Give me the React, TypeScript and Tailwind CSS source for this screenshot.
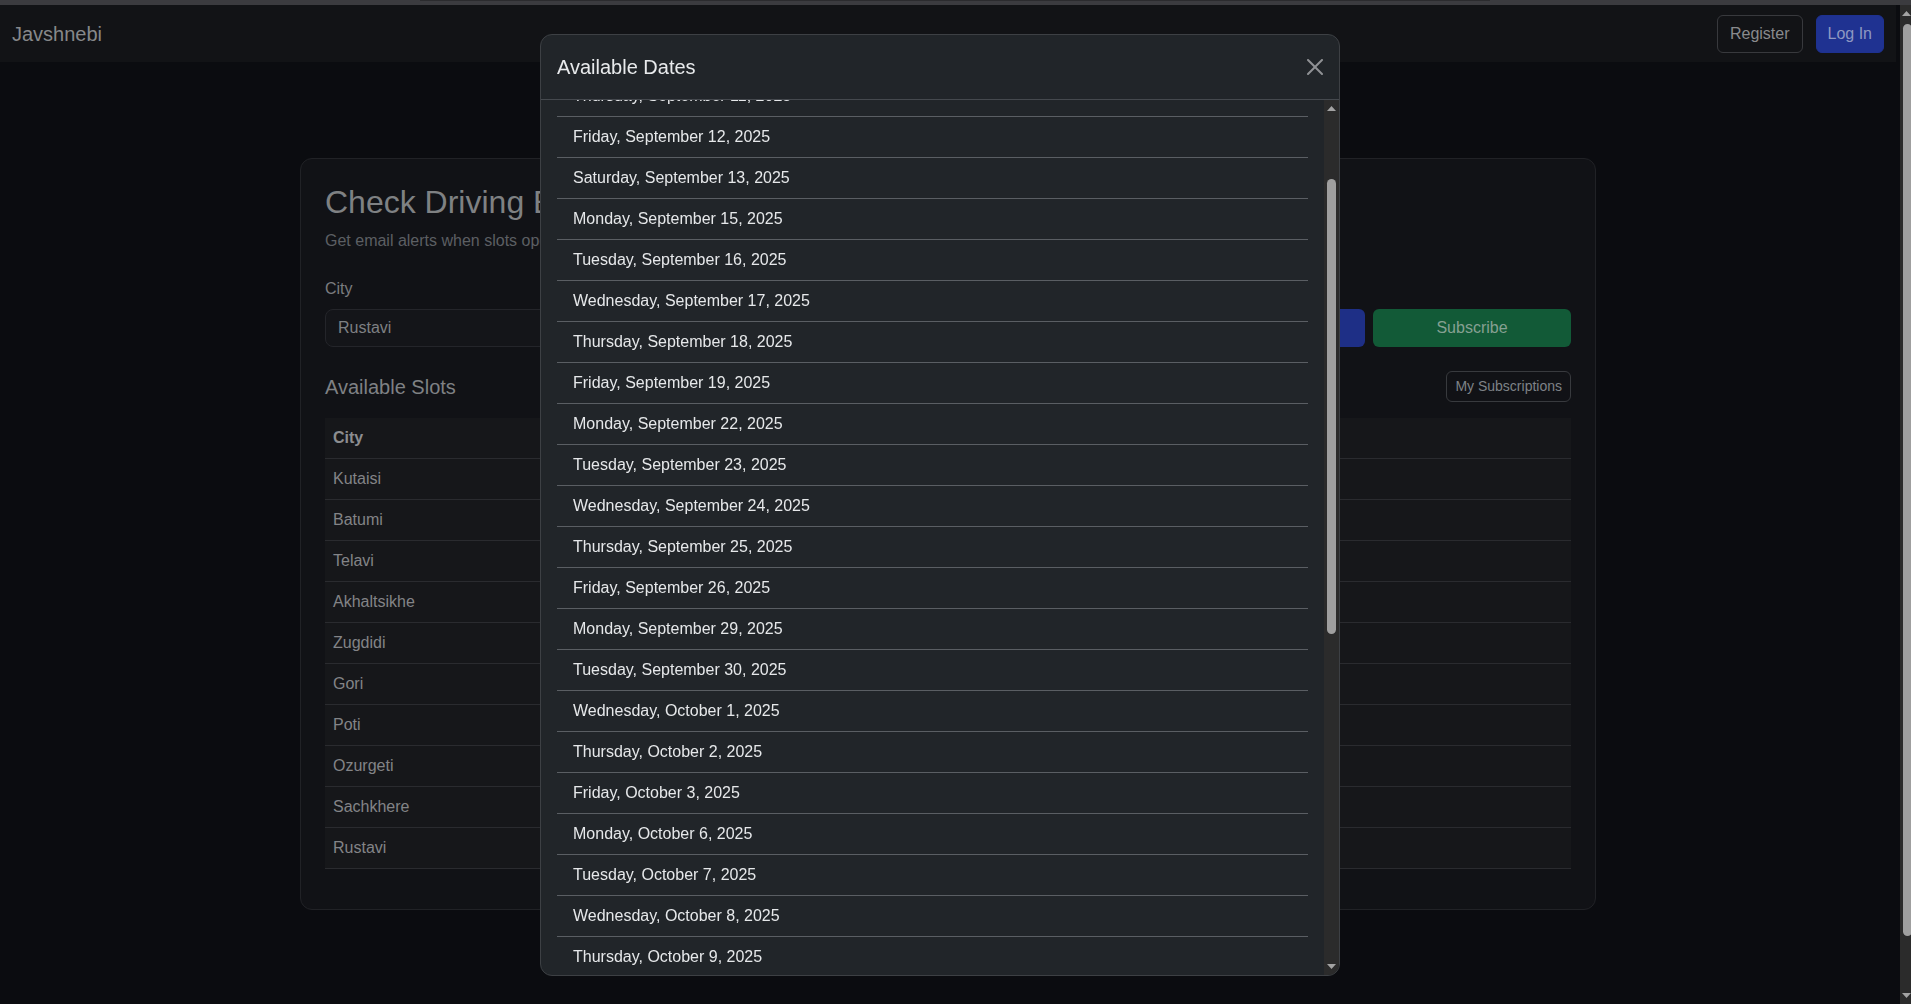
import { useLayoutEffect, useRef } from "react";

const WD = ["Sunday", "Monday", "Tuesday", "Wednesday", "Thursday", "Friday", "Saturday"];
const MO = ["January", "February", "March", "April", "May", "June", "July", "August", "September", "October", "November", "December"];

const RAW: [number, number][] = [
  ...[9, 10, 11, 12, 13, 15, 16, 17, 18, 19, 22, 23, 24, 25, 26, 29, 30].map((d) => [8, d] as [number, number]),
  ...[1, 2, 3, 6, 7, 8, 9, 10, 13, 14, 15, 16, 17, 20, 21, 22, 23, 24, 27, 28, 29, 30].map((d) => [9, d] as [number, number]),
];

const DATES = RAW.map(([m, d]) => {
  const dt = new Date(2025, m, d);
  return `${WD[dt.getDay()]}, ${MO[m]} ${d}, 2025`;
});

const CITIES = ["Kutaisi", "Batumi", "Telavi", "Akhaltsikhe", "Zugdidi", "Gori", "Poti", "Ozurgeti", "Sachkhere", "Rustavi"];

function UpArrow() {
  return (
    <svg width="9" height="5" viewBox="0 0 9 5">
      <polygon points="0,5 4.5,0 9,5" fill="#a3a3a3" />
    </svg>
  );
}
function DownArrow() {
  return (
    <svg width="9" height="5" viewBox="0 0 9 5">
      <polygon points="0,0 9,0 4.5,5" fill="#a3a3a3" />
    </svg>
  );
}

export default function App() {
  const bodyRef = useRef<HTMLDivElement>(null);
  useLayoutEffect(() => {
    if (bodyRef.current) bodyRef.current.scrollTop = 122;
  }, []);

  return (
    <div className="flex h-screen flex-col overflow-hidden bg-[#0b0c10] font-['Liberation_Sans',Arial,sans-serif] text-[16px] leading-6">
      {/* top strip */}
      <div className="h-[5px] shrink-0 bg-[#3b3b3f]">
        <div className="ml-[420px] h-px w-[1070px] bg-[#2b2b2e]" />
      </div>

      <div className="flex min-h-0 flex-1">
        {/* page */}
        <div className="min-w-0 flex-1 overflow-hidden">
          {/* navbar */}
          <nav className="flex h-[57px] items-center justify-between bg-[#121316] px-3">
            <span className="text-[20px] leading-[30px] text-[#86888a]">Javshnebi</span>
            <div className="flex items-center gap-[13px]">
              <button className="h-[38px] rounded-md border border-[#38393d] px-3 text-[#898a8d]">Register</button>
              <button className="h-[38px] rounded-md border border-[#1e3190] bg-[#1f3291] px-[11px] text-[#8e98c2]">Log In</button>
            </div>
          </nav>

          {/* card */}
          <div className="mx-auto mt-[96px] w-[1296px] rounded-xl border border-[#212226] bg-[#111216] p-6">
            <h2 className="mb-2 text-[32px] leading-[1.2] text-[#7f8183]">Check Driving Exam Slots</h2>
            <p className="mb-6 text-[#5c5f63]">Get email alerts when slots open up in your preferred city.</p>

            <div className="mb-6 flex items-end gap-2">
              <div className="flex-1">
                <label className="mb-2 block text-[#7a7c7f]">City</label>
                <div className="flex h-[38px] items-center rounded-lg border border-[#24252a] bg-[#141519] px-3 text-[#7e8083]">
                  Rustavi
                </div>
              </div>
              <button className="h-[38px] w-[198px] rounded-md bg-[#1e2f86] text-[#8b95c0]">Check Slots</button>
              <button className="h-[38px] w-[198px] rounded-md bg-[#125a37] text-[#86a092]">Subscribe</button>
            </div>

            <div className="mb-4 flex items-center justify-between">
              <h5 className="text-[20px] leading-6 text-[#7f8184]">Available Slots</h5>
              <button className="rounded-md border border-[#383a3e] px-2 py-1 text-[14px] leading-[21px] text-[#7e8287]">
                My Subscriptions
              </button>
            </div>

            <table className="mb-4 w-full table-fixed border-collapse bg-[#16171a]">
              <thead>
                <tr className="border-b border-[#2a2b2f]">
                  <th className="w-1/2 p-2 text-left font-bold text-[#8c8d90]">City</th>
                  <th className="w-1/2 p-2 text-left font-bold text-[#8c8d90]">Dates</th>
                </tr>
              </thead>
              <tbody>
                {CITIES.map((c) => (
                  <tr key={c} className="border-b border-[#2a2b2f]">
                    <td className="p-2 text-[#838487]">{c}</td>
                    <td className="p-2 text-[#838487]">View</td>
                  </tr>
                ))}
              </tbody>
            </table>
          </div>
        </div>

        {/* page scrollbar */}
        <div className="flex w-[15px] shrink-0">
          <div className="w-[4px]" />
          <div className="relative flex-1 bg-[#2b2b2b]">
            <div className="absolute left-[2px] top-[6px]">
              <UpArrow />
            </div>
            <div className="absolute left-[3px] top-[19px] h-[912px] w-[9px] rounded-[5px] bg-[#9f9f9f]" />
            <div className="absolute bottom-[6px] left-[2px]">
              <DownArrow />
            </div>
          </div>
        </div>
      </div>

      {/* modal */}
      <div className="fixed left-[540px] top-[34px] flex h-[942px] w-[800px] flex-col overflow-hidden rounded-xl border border-[#3d4044] bg-[#212529]">
        <div className="flex shrink-0 items-center justify-between border-b border-[#45494e] p-4">
          <h5 className="text-[20px] leading-[30px] text-[#e8eaec]">Available Dates</h5>
          <button className="-mr-2 flex h-8 w-8 items-center justify-center">
            <svg width="16" height="16" viewBox="0 0 16 16" fill="#8f9194">
              <path d="M.293.293a1 1 0 0 1 1.414 0L8 6.586 14.293.293a1 1 0 1 1 1.414 1.414L9.414 8l6.293 6.293a1 1 0 0 1-1.414 1.414L8 9.414l-6.293 6.293a1 1 0 0 1-1.414-1.414L6.586 8 .293 1.707a1 1 0 0 1 0-1.414" />
            </svg>
          </button>
        </div>
        <div className="flex min-h-0 flex-1">
          <div ref={bodyRef} className="min-w-0 flex-1 overflow-hidden p-4">
            <ul>
              {DATES.map((d) => (
                <li key={d} className="border-b border-[#5a5e63] px-4 py-2 text-[#e6e8ea] last:border-b-0">
                  {d}
                </li>
              ))}
            </ul>
          </div>
          {/* modal body scrollbar */}
          <div className="relative w-[15px] shrink-0 bg-[#2b2b2b]">
            <div className="absolute left-[3px] top-[6px]">
              <UpArrow />
            </div>
            <div className="absolute left-[3px] top-[79px] h-[455px] w-[9px] rounded-[5px] bg-[#9f9f9f]" />
            <div className="absolute bottom-[6px] left-[3px]">
              <DownArrow />
            </div>
          </div>
        </div>
      </div>
    </div>
  );
}
